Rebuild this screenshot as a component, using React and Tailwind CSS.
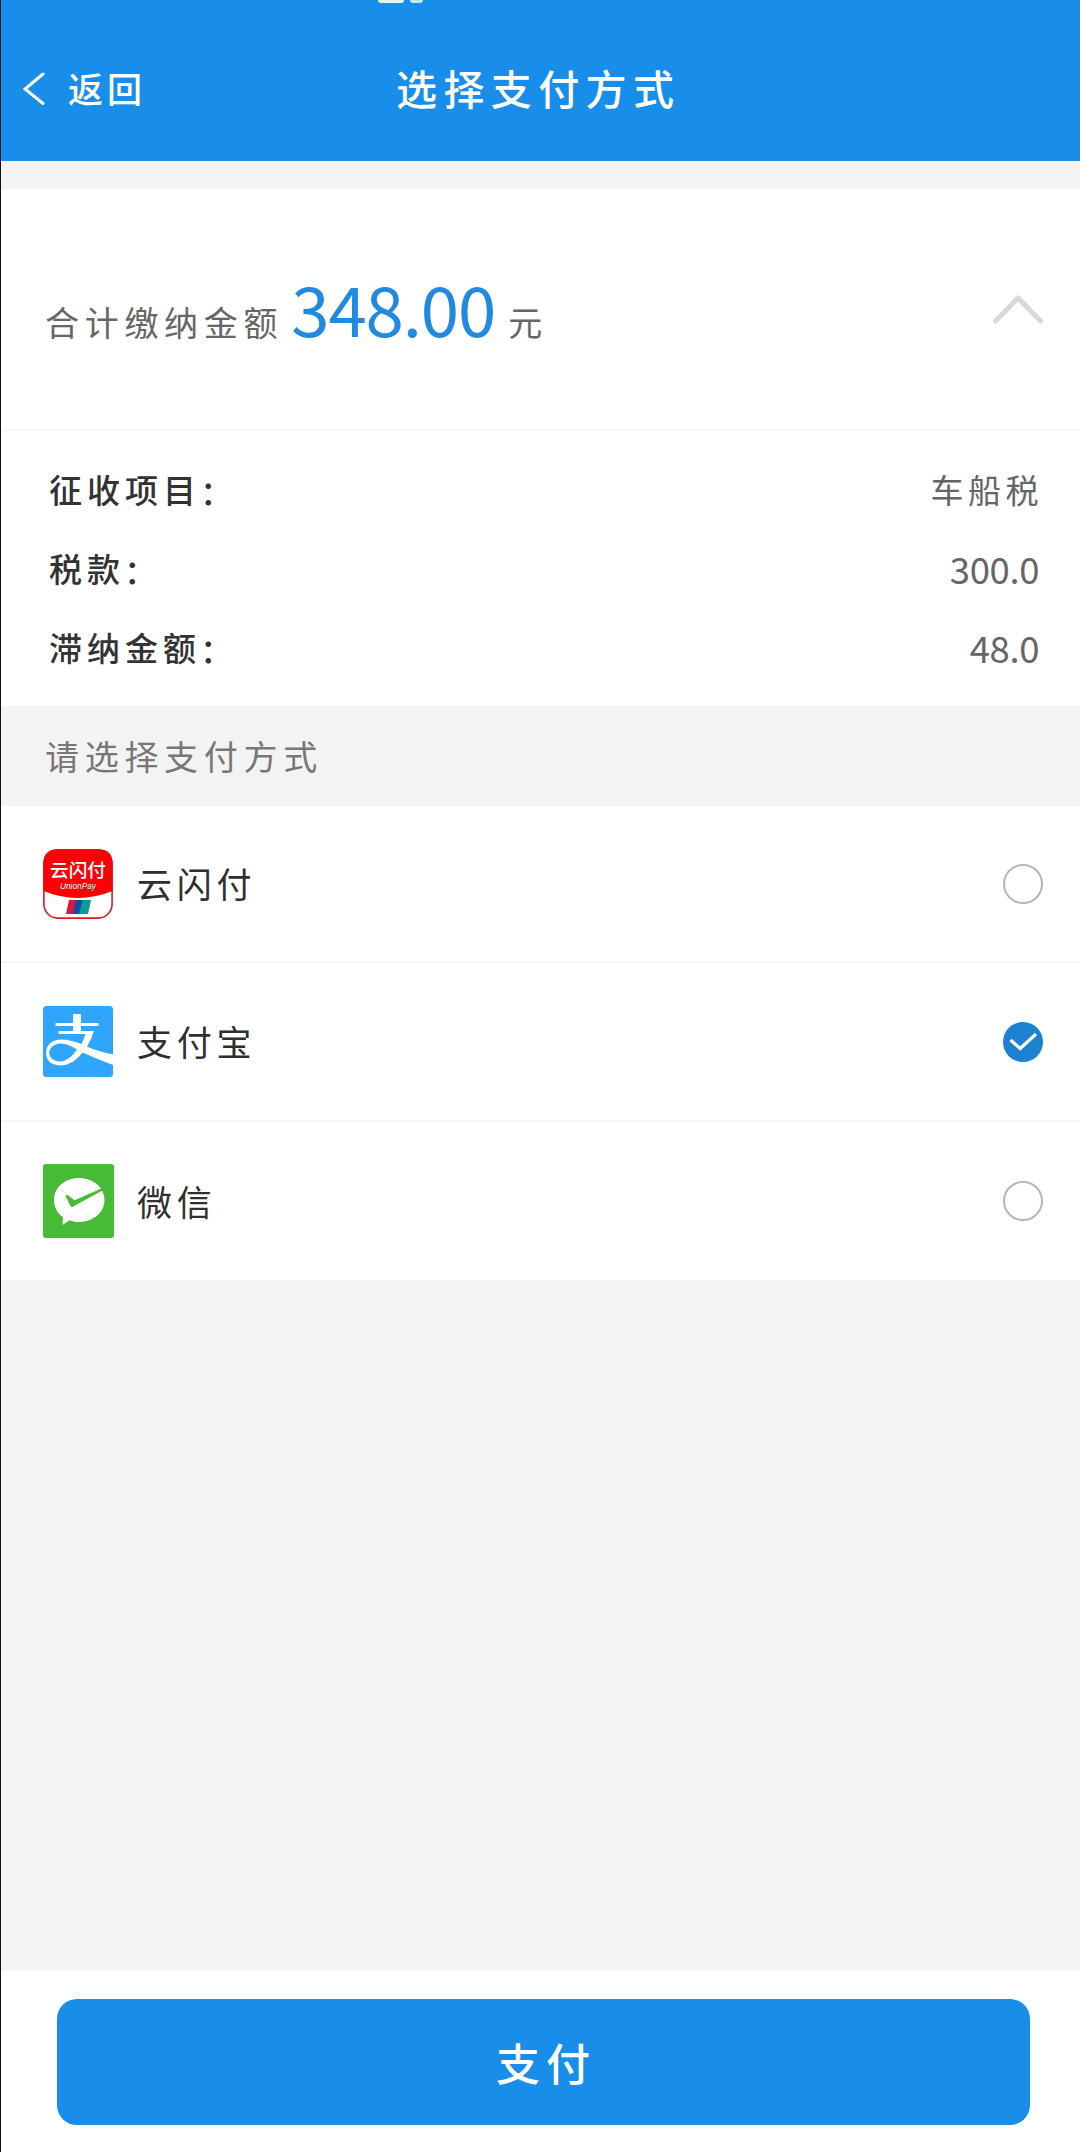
import React from "react";

function BackIcon() {
  return (
    <svg className="h-[34px] w-[22px]" viewBox="0 0 22 34" fill="none" stroke="#fff" strokeWidth="3" strokeLinecap="round">
      <path d="M20 2 L2 17 L20 31.5" />
    </svg>
  );
}

function UnionPayLogo() {
  return (
    <svg className="h-[70px] w-[70px]" viewBox="0 0 70 70">
      <rect x="0.9" y="0.9" width="68.2" height="68.2" rx="14" fill="#fff" stroke="#dc1c24" strokeWidth="1.6" />
      <path d="M0.5 42 V14 Q0.5 0.5 14 0.5 H56 Q69.5 0.5 69.5 14 V42 Q35 56 0.5 42Z" fill="#fb0007" />
      <text x="35" y="28" textAnchor="middle" fontSize="18.7" fontWeight="500" fill="#fff" fontFamily="Noto Sans CJK SC, sans-serif">云闪付</text>
      <text x="35" y="39.5" textAnchor="middle" textLength="36" fontSize="8.3" fontStyle="italic" fill="#fff" fontFamily="Liberation Sans, sans-serif">UnionPay</text>
      <path d="M26 51 H34 L31 65 H23Z" fill="#e0143c" />
      <path d="M33 51 H41 L38 65 H29.5Z" fill="#0b4ea2" />
      <path d="M39.5 51 H48 L45 65 H36Z" fill="#0b9a94" />
    </svg>
  );
}

function AlipayLogo() {
  return (
    <svg className="h-[71px] w-[70px]" viewBox="0 0 70 71">
      <rect width="70" height="71" rx="3.5" fill="#2fa5fe" />
      <path
        d="M30 8 H38 V17 H55.5 V20 H38 V25 H51 Q48.5 33.5 44 40.5 Q52 44.5 70 48.5 V59 Q54 53 39.5 46.5 Q30 59.5 17 59.5 Q3 58.5 3 46 Q4.5 34 18 33.5 Q27 33.5 38.5 38 Q41 33.5 42.3 28 H15.5 V25 H30 V20 H12.5 V17 H30Z"
        fill="#fff"
      />
      <path d="M34 43.5 Q24 37 16.5 37.5 Q6.5 39 6 47 Q7.5 55.5 17.5 55.5 Q26 55 34 43.5Z" fill="#2fa5fe" />
    </svg>
  );
}

function WechatLogo() {
  return (
    <svg className="h-[74px] w-[71px]" viewBox="0 0 71 74">
      <rect width="71" height="74" rx="3" fill="#48bb36" />
      <path d="M36 14 C50 14 61.5 23.5 61.5 36 C61.5 48.5 50 58 36 58 C32 58 29.5 57.3 26.5 56.2 L19.5 61 L20 53 C14 49 11 43 11 36 C11 23.5 22 14 36 14Z" fill="#fff" />
      <path d="M22.5 32 Q23.5 29.5 26.5 32.5 L31.5 36.2 L59.5 24 V26.5 L31 42 Q28.5 44 27.2 41.5Z" fill="#48bb36" />
    </svg>
  );
}

function Radio({ checked }) {
  if (!checked) return <span className="h-10 w-10 rounded-full border-2 border-[#b6b6b6]" />;
  return (
    <svg className="h-10 w-10" viewBox="0 0 40 40">
      <circle cx="20" cy="20" r="20" fill="#1e82d2" />
      <path d="M7.5 18 L17.2 26.5 L33 12" fill="none" stroke="#fff" strokeWidth="3.2" />
    </svg>
  );
}

const details = [
  { label: "征收项目", value: "车船税", cjk: true },
  { label: "税款", value: "300.0" },
  { label: "滞纳金额", value: "48.0" },
];

const methods = [
  { name: "云闪付", logo: <UnionPayLogo />, row: "h-[157px] border-b-2" },
  { name: "支付宝", logo: <AlipayLogo />, row: "h-[159px] border-b-2", checked: true },
  { name: "微信", logo: <WechatLogo />, row: "h-[158px]" },
];

export default function App() {
  return (
    <div className="flex h-[2152px] w-[1080px] flex-col overflow-hidden border-l border-[#111] bg-[#f3f3f3] font-['Noto_Sans_CJK_SC',sans-serif]">
      <header className="relative flex h-[161px] shrink-0 items-center bg-[#188dea] pt-[16px] text-white">
        <div className="absolute top-0 left-[377px] flex gap-[6px]">
          <span className="h-[3px] w-[26px] rounded-b-sm bg-[#dff8ff]" />
          <span className="h-[3px] w-[13px] rounded-b-sm bg-[#c2eaff]" />
        </div>
        <button className="flex w-[395px] items-center pl-[22px]">
          <BackIcon />
          <span className="ml-[23px] pb-[2px] text-[35px] leading-none font-medium tracking-[4px]">返回</span>
        </button>
        <h1 className="pb-[2px] text-[41px] leading-none font-medium tracking-[6.4px] whitespace-nowrap">选择支付方式</h1>
      </header>

      <section className="mt-7 shrink-0 bg-white">
        <div className="flex h-[242px] items-center justify-between border-b-2 border-[#f8f8f8] pr-[37px] pl-[44px]">
          <div className="flex items-baseline pt-[12px] text-[#666]">
            <span className="relative -top-px text-[34px] leading-[80px] tracking-[5.7px]">合计缴纳金额</span>
            <span className="ml-[8px] text-[69px] leading-[80px] tracking-[-1.1px] text-[#2189df]">348.00</span>
            <span className="relative -top-px ml-[13px] text-[34px] leading-[80px]">元</span>
          </div>
          <svg className="h-[30px] w-[50px]" viewBox="0 0 50 30" fill="none" stroke="#d8d8d8" strokeWidth="5" strokeLinecap="round" strokeLinejoin="round">
            <path d="M2.5 27 L25 4 L47.5 27" />
          </svg>
        </div>
        <dl className="flex h-[275px] flex-col pt-[20px] pr-[41px] pl-[48px]">
          {details.map((d) => (
            <div key={d.label} className="flex h-[79px] items-center justify-between">
              <dt className="pb-[2px] text-[33px] leading-none font-medium tracking-[5px] text-[#333]">
                {d.label}
                <span className="relative top-[2px] -left-[1px]">：</span>
              </dt>
              <dd className={d.cjk ? "mr-[-4px] pb-[2px] text-[33px] leading-none tracking-[4.5px] text-[#666]" : "text-[36.5px] leading-none tracking-[-0.4px] text-[#666]"}>{d.value}</dd>
            </div>
          ))}
        </dl>
      </section>

      <h2 className="flex h-[100px] shrink-0 items-center pl-[44px] text-[34px] leading-none tracking-[5.7px] text-[#777]">请选择支付方式</h2>

      <ul className="shrink-0 bg-white">
        {methods.map((m) => (
          <li key={m.name} className={"flex items-center border-[#f6f6f6] pr-[37px] pl-[42px] " + m.row}>
            <span className="flex w-[71px]">{m.logo}</span>
            <span className="ml-[23px] flex-1 pb-[2px] text-[35px] leading-none tracking-[4.7px] text-[#2f2f2f]">{m.name}</span>
            <Radio checked={m.checked} />
          </li>
        ))}
      </ul>

      <footer className="mt-auto h-[181px] shrink-0 bg-white pt-[28px] pr-[50px] pl-[56px]">
        <button className="flex h-[126px] w-full items-center justify-center rounded-[20px] bg-[#188dea] pl-[5px] text-[44px] leading-none font-medium tracking-[6px] text-white">支付</button>
      </footer>
    </div>
  );
}
